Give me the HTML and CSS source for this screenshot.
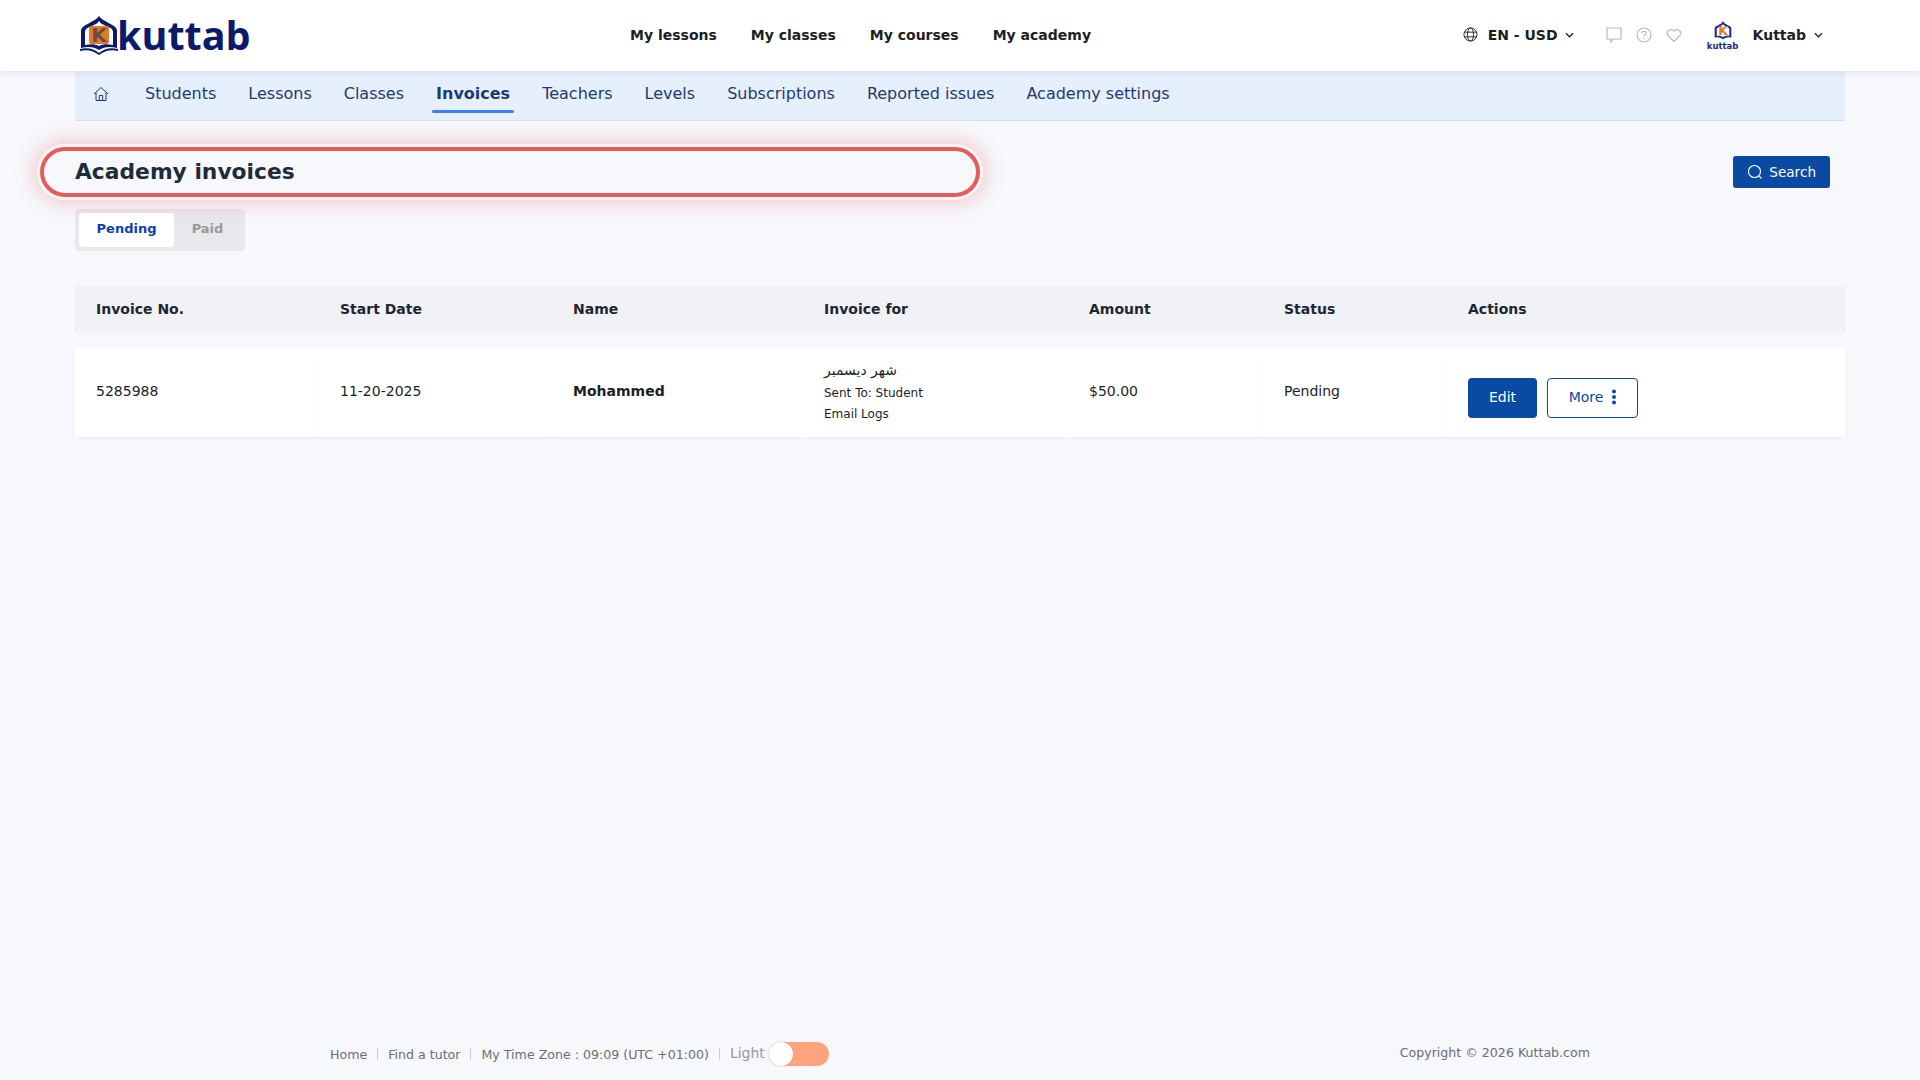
FILE: index.html
```html
<!doctype html>
<html>
<head>
<meta charset="utf-8">
<title>Academy invoices</title>
<link rel="stylesheet" href="styles.css">
</head>
<body>
	<header class="topbar">
		<a class="logo" href="#">
			<svg class="logo_mark" viewBox="0 0 40 40" width="40" height="40">
				<path d="M2 33V16C2 11 8 10 12 7C15 5 18 4 20 1C22 4 25 5 28 7C32 10 38 11 38 16V33C30 31 25 32 20 35C15 32 10 31 2 33Z" fill="#0b1a6b"/>
				<path d="M6 30V17C6 13 11 12 15 10C17 9 19 8 20 6C21 8 23 9 25 10C29 12 34 13 34 17V30C28 29 24 29 20 31C16 29 12 29 6 30Z" fill="#fff"/>
				<rect x="10" y="11" width="20" height="18" rx="2" fill="#e5792b"/>
				<text class="logo_k" x="20" y="27" text-anchor="middle">K</text>
				<path d="M1 34C9 32 15 34 20 38C25 34 31 32 39 34V36C31 34 26 36 20 40C14 36 9 34 1 36Z" fill="#0b1a6b"/>
			</svg>
			<span class="logo_text">kuttab</span>
		</a>
		<nav class="mainnav">
			<a href="#">My lessons</a>
			<a href="#">My classes</a>
			<a href="#">My courses</a>
			<a href="#">My academy</a>
		</nav>
		<div class="topright">
			<div class="lang">
				<svg viewBox="0 0 16 16" width="15" height="15" fill="none" stroke="#222" stroke-width="1">
					<circle cx="8" cy="8" r="7"/>
					<ellipse cx="8" cy="8" rx="3.2" ry="7"/>
					<path d="M1.5 5.5H14.5M1.5 10.5H14.5"/>
				</svg>
				<span>EN - USD</span>
				<svg class="chev lang_chev" viewBox="0 0 10 6" width="9" height="6" fill="none" stroke="#222" stroke-width="1.4"><path d="M1 1L5 5L9 1"/></svg>
			</div>
			<div class="icons">
				<svg viewBox="0 0 16 16" width="16" height="16" fill="none" stroke="#b4bbc4" stroke-width="1.2"><path d="M1 1H15V12H7L5 15V12H1Z"/></svg>
				<svg viewBox="0 0 16 16" width="16" height="16" fill="none" stroke="#b4bbc4" stroke-width="1.2"><circle cx="8" cy="8" r="7"/><path d="M5.8 6.2C5.8 3.8 10.2 3.8 10.2 6.2C10.2 7.8 8 7.8 8 9.6M8 11V12.2"/></svg>
				<svg viewBox="0 0 16 16" width="16" height="16" fill="none" stroke="#b4bbc4" stroke-width="1.2"><path d="M8 14.5L1.8 8.2C-1 4.5 5 .5 8 4.2C11 .5 17 4.5 14.2 8.2Z"/></svg>
			</div>
			<div class="account">
				<div class="avatar">
					<svg viewBox="0 0 24 24" width="20" height="20">
						<path d="M2 20V9C2 6 6 6 8 4C10 3 11 2 12 0C13 2 14 3 16 4C18 6 22 6 22 9V20C18 19 15 20 12 22C9 20 6 19 2 20Z" fill="#1c2c84"/>
						<path d="M4.500 18V9C6 8 8 7 10 5.500C11 5 11.500 4.500 12 4C12.500 4.500 13 5 14 5.500C16 7 18 8 19.500 9V18C17 17.500 14 18 12 19.500C10 18 7 17.500 4.500 18Z" fill="#fff"/>
						<text class="avatar_k" x="12" y="17" text-anchor="middle">K</text>
					</svg>
					<span>kuttab</span>
				</div>
				<span class="account_name">Kuttab</span>
				<svg class="chev" viewBox="0 0 10 6" width="9" height="6" fill="none" stroke="#222" stroke-width="1.4"><path d="M1 1L5 5L9 1"/></svg>
			</div>
		</div>
	</header>

	<nav class="subnav">
		<a class="home" href="#">
			<svg viewBox="0 0 16 16" width="16" height="16" fill="none" stroke="#1c3a73" stroke-width="1"><path d="M1 8L8 1.500L15 8M3 6.500V14.500H13V6.500M6.300 14.500V9.500H9.700V14.500"/></svg>
		</a>
		<a href="#">Students</a>
		<a href="#">Lessons</a>
		<a href="#">Classes</a>
		<a class="current" href="#">Invoices</a>
		<a href="#">Teachers</a>
		<a href="#">Levels</a>
		<a href="#">Subscriptions</a>
		<a href="#">Reported issues</a>
		<a href="#">Academy settings</a>
	</nav>

	<main class="content">
		<div class="title_row">
			<h1 class="page_title">Academy invoices</h1>
			<a class="btn_search" href="#">
				<svg viewBox="0 0 16 16" width="16" height="16" fill="none" stroke="#fff" stroke-width="1.100"><circle cx="7.500" cy="7.500" r="6"/><path d="M12 12L14.500 14.500"/></svg>
				Search
			</a>
		</div>
		<div class="tabs">
			<span class="tab active">Pending</span>
			<span class="tab">Paid</span>
		</div>

		<div class="grid_table head_row">
			<div>Invoice No.</div>
			<div>Start Date</div>
			<div>Name</div>
			<div>Invoice for</div>
			<div>Amount</div>
			<div>Status</div>
			<div>Actions</div>
		</div>
		<div class="grid_table body_row">
			<div>5285988</div>
			<div>11-20-2025</div>
			<div><b>Mohammed</b></div>
			<div class="inv_for">
				<span class="ar">شهر ديسمبر</span>
				<small>Sent To: Student</small>
				<small>Email Logs</small>
			</div>
			<div>$50.00</div>
			<div>Pending</div>
			<div class="actions">
				<a class="btn_edit" href="#">Edit</a>
				<a class="btn_more" href="#">More
					<svg viewBox="0 0 4 16" width="4" height="16" fill="#0b4aa2"><circle cx="2" cy="2.500" r="2"/><circle cx="2" cy="8" r="2"/><circle cx="2" cy="13.500" r="2"/></svg>
				</a>
			</div>
		</div>
	</main>

	<footer class="foot">
		<div class="foot_links">
			<a href="#">Home</a>
			<i></i>
			<a href="#">Find a tutor</a>
			<i></i>
			<span>My Time Zone : 09:09 (UTC +01:00)</span>
			<i></i>
			<span class="light">Light</span>
			<span class="toggle"><span class="knob"></span></span>
		</div>
		<div class="copy">Copyright © 2026 Kuttab.com</div>
	</footer>
</body>
</html>
```

FILE: styles.css
```css
*{
	padding: 0;
	margin: 0;
	box-sizing: border-box;
	text-decoration: none;
}
html,body{
	height: 100%;
}
body{
	display: flex;
	flex-direction: column;
	min-height: 100vh;
	background-color: #f7f8fc;
	font-family: "DejaVu Sans", "Noto Sans CJK SC", sans-serif;
	font-size: 14px;
	color: #1d2733;
}
a{
	color: inherit;
}

/* top bar */
.topbar{
	display: flex;
	align-items: center;
	height: 71px;
	padding-left: 79px;
	padding-bottom: 2px;
	background-color: #fff;
	box-shadow: 0 2px 6px rgba(30,50,90,.1);
	position: relative;
}
.logo{
	display: flex;
	align-items: center;
	width: 551px;
}
.logo_mark{
	display: block;
}
.logo_k{
	font-family: "DejaVu Sans", sans-serif;
	font-weight: 700;
	font-size: 20px;
	fill: #6b4a48;
}
.avatar_k{
	font-family: "DejaVu Sans", sans-serif;
	font-weight: 700;
	font-size: 15px;
	fill: #e5792b;
}
.logo_text{
	font-family: "Open Sans", sans-serif;
	font-weight: 700;
	font-size: 39.500px;
	line-height: 50px;
	color: #0b1a6b;
	margin-left: -2px;
}
.mainnav{
	display: flex;
	gap: 34px;
	font-size: 14px;
	font-weight: 700;
	color: #1b1f24;
}
.topright{
	display: flex;
	align-items: center;
	margin-left: auto;
	padding-right: 97px;
}
.lang{
	display: flex;
	align-items: center;
	gap: 10px;
	font-weight: 700;
	font-size: 14px;
	color: #1b1f24;
}
.lang_chev{
	margin-left: -3px;
}
.icons{
	display: flex;
	gap: 14px;
	margin-left: 32px;
}
.account{
	display: flex;
	align-items: center;
	margin-left: 24px;
	font-weight: 700;
	color: #1b1f24;
}
.avatar{
	display: flex;
	flex-direction: column;
	align-items: center;
	width: 34px;
	margin-top: 2px;
}
.avatar span{
	font-size: 8.500px;
	font-weight: 700;
	line-height: 10px;
	color: #1c2c84;
}
.account_name{
	margin: 0 8px 0 13px;
}

/* second nav */
.subnav{
	display: flex;
	align-items: stretch;
	gap: 24px;
	height: 50px;
	margin: 0 75px;
	padding-left: 18px;
	background-color: #e6f0fc;
	border-bottom: 1px solid #cfe2fa;
	font-size: 16px;
	color: #1c3a73;
}
.subnav a{
	display: flex;
	align-items: center;
	padding: 4px 4px 0;
	margin-bottom: 7px;
	position: relative;
	line-height: 20px;
}
.subnav .home{
	padding: 4px 8px 0 0;
}
.subnav .current{
	font-weight: 700;
}
.subnav .current::after{
	content: "";
	position: absolute;
	left: 0;
	right: 0;
	bottom: 0;
	height: 3px;
	background-color: #3b82f6;
	border-radius: 2px;
}

/* content */
.content{
	padding: 0 75px;
}
.title_row{
	display: flex;
	align-items: center;
	justify-content: space-between;
	height: 50px;
	margin-top: 26px;
	padding-right: 15px;
}
.page_title{
	display: flex;
	align-items: center;
	width: 940px;
	height: 50px;
	margin-left: -35px;
	padding-left: 31px;
	padding-bottom: 1px;
	border: 4px solid #e35d5d;
	border-radius: 25px;
	box-shadow: 0 0 0 3px rgba(255,255,255,.75), 0 0 18px 8px rgba(227,93,93,.26);
	font-size: 21.800px;
	color: #1d2b3a;
}
.btn_search{
	display: flex;
	align-items: center;
	gap: 6px;
	height: 32px;
	padding: 0 14px 1px;
	background-color: #0b4aa2;
	border-radius: 3px;
	font-size: 13.600px;
	color: #fff;
}
.tabs{
	display: flex;
	width: 170px;
	height: 42px;
	margin-top: 12px;
	padding: 4px;
	background-color: #e8e9ed;
	border-radius: 4px;
	font-size: 13px;
	font-weight: 700;
	color: #999;
}
.tab{
	display: flex;
	align-items: center;
	justify-content: center;
	flex: 1;
	padding-bottom: 3px;
}
.tab.active{
	flex: none;
	width: 95px;
	background-color: #fff;
	border-radius: 4px;
	color: #0b3fb0;
}

.grid_table{
	display: grid;
	grid-template-columns: 244px 233px 251px 265px 195px 184px 1fr;
}
.head_row{
	align-items: center;
	height: 47px;
	margin-top: 35px;
	padding-bottom: 2px;
	background-color: #f1f2f6;
	font-weight: 700;
}
.head_row div,.body_row > div{
	padding-left: 21px;
}
.body_row{
	height: 90px;
	margin-top: 14px;
	background-color: #fff;
	color: #1b1f24;
}
.body_row > div{
	display: flex;
	align-items: center;
	padding-bottom: 2px;
	box-shadow: 0 4px 4px -3px rgba(30,50,90,.09);
}
.body_row > .inv_for{
	flex-direction: column;
	align-items: flex-start;
	justify-content: flex-start;
	padding-top: 12px;
	padding-bottom: 0;
}
.ar{
	font-size: 14px;
	line-height: 22px;
	margin-bottom: 2px;
}
.inv_for small{
	font-size: 12px;
	line-height: 21px;
}
.body_row > .actions{
	gap: 10px;
	padding-top: 12px;
	padding-bottom: 0;
}
.btn_edit{
	display: flex;
	align-items: center;
	justify-content: center;
	width: 69px;
	height: 40px;
	padding-bottom: 2px;
	background-color: #0b4aa2;
	border-radius: 4px;
	color: #fff;
}
.btn_more{
	display: flex;
	align-items: center;
	justify-content: center;
	gap: 9px;
	width: 91px;
	height: 40px;
	padding-bottom: 2px;
	background-color: #fff;
	border: 1px solid #0b4aa2;
	border-radius: 4px;
	color: #0b4aa2;
}

/* footer */
.foot{
	display: flex;
	justify-content: space-between;
	margin-top: auto;
	height: 50px;
	padding: 0 330px 0 330px;
	font-size: 12.600px;
	color: #6e6e6e;
}
.foot_links{
	display: flex;
	align-items: center;
	height: 48px;
}
.foot_links i{
	width: 1px;
	height: 12px;
	margin: 0 10px;
	background-color: #ccc;
}
.light{
	font-size: 14px;
	color: #999;
	margin-right: 4px;
	margin-bottom: 2px;
}
.toggle{
	display: block;
	width: 60px;
	height: 24px;
	background-color: #ffa47c;
	border-radius: 12px;
}
.knob{
	display: block;
	width: 24px;
	height: 24px;
	background-color: #fff;
	border-radius: 50%;
	box-shadow: 0 0 2px rgba(200,120,90,.5);
}
.copy{
	padding-top: 15px;
}
```
